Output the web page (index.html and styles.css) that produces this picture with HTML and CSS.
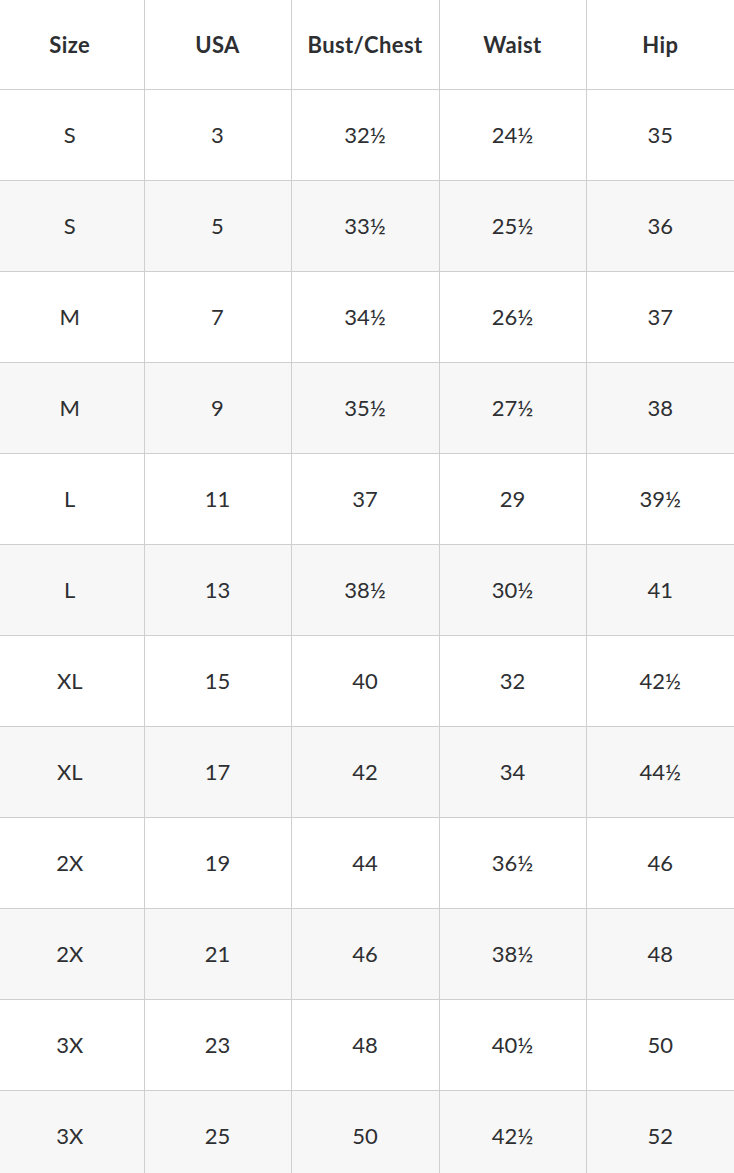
FILE: index.html
```html
<!DOCTYPE html>
<html lang="en">
<head>
<meta charset="utf-8">
<title>Size Chart</title>
<link rel="stylesheet" href="styles.css">
</head>
<body>
<table class="size-table">
  <colgroup>
    <col class="col-a"><col class="col-b"><col class="col-a"><col class="col-b"><col class="col-a">
  </colgroup>
  <thead>
    <tr><th>Size</th><th>USA</th><th>Bust/Chest</th><th>Waist</th><th>Hip</th></tr>
  </thead>
  <tbody>
    <tr><td>S</td><td>3</td><td>32½</td><td>24½</td><td>35</td></tr>
    <tr><td>S</td><td>5</td><td>33½</td><td>25½</td><td>36</td></tr>
    <tr><td>M</td><td>7</td><td>34½</td><td>26½</td><td>37</td></tr>
    <tr><td>M</td><td>9</td><td>35½</td><td>27½</td><td>38</td></tr>
    <tr><td>L</td><td>11</td><td>37</td><td>29</td><td>39½</td></tr>
    <tr><td>L</td><td>13</td><td>38½</td><td>30½</td><td>41</td></tr>
    <tr><td>XL</td><td>15</td><td>40</td><td>32</td><td>42½</td></tr>
    <tr><td>XL</td><td>17</td><td>42</td><td>34</td><td>44½</td></tr>
    <tr><td>2X</td><td>19</td><td>44</td><td>36½</td><td>46</td></tr>
    <tr><td>2X</td><td>21</td><td>46</td><td>38½</td><td>48</td></tr>
    <tr><td>3X</td><td>23</td><td>48</td><td>40½</td><td>50</td></tr>
    <tr><td>3X</td><td>25</td><td>50</td><td>42½</td><td>52</td></tr>
  </tbody>
</table>
</body>
</html>
```
FILE: styles.css
```css
html, body {
  margin: 0;
  padding: 0;
  background: #ffffff;
  overflow: hidden;
}
body {
  font-family: Lato, "Noto Sans", sans-serif;
  color: #2e2f32;
}
.size-table {
  width: 738px;
  margin-left: -4px;
  table-layout: fixed;
  border-collapse: collapse;
  border-spacing: 0;
}
.col-a { width: 148px; }
.col-b { width: 147px; }
.size-table th,
.size-table td {
  padding: 0;
  text-align: center;
  vertical-align: middle;
  font-size: 22px;
  line-height: 1;
}
.size-table th {
  height: 89px;
  font-weight: 700;
  letter-spacing: 0.4px;
}
.size-table td {
  height: 90px;
  font-weight: 400;
}
.size-table th + th,
.size-table td + td {
  border-left: 1px solid #cfcfd1;
}
.size-table tbody tr {
  border-top: 1px solid #cfcfd1;
}
.size-table tbody tr:nth-child(even) {
  background: #f7f7f7;
}
```
